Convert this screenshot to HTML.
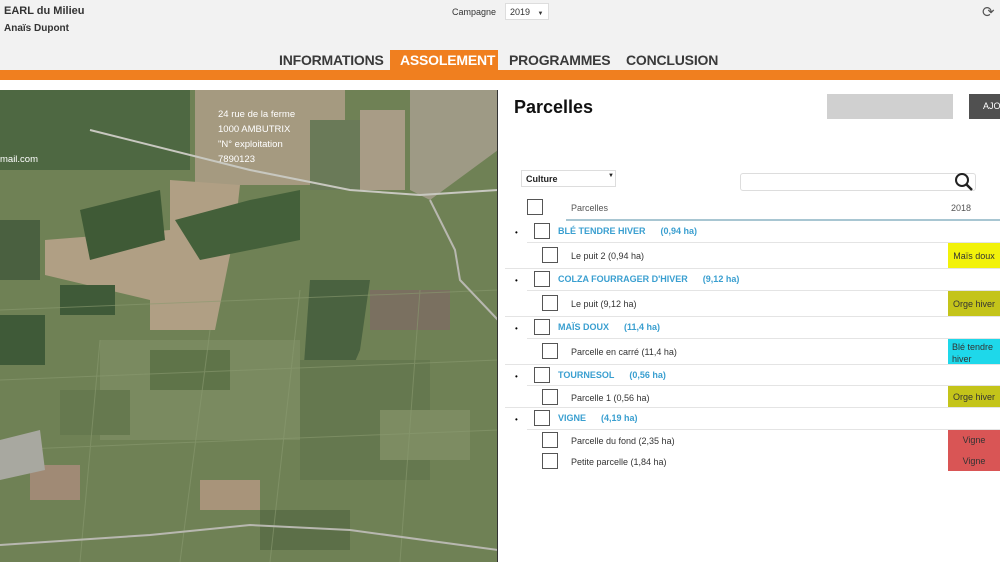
<!DOCTYPE html><html><head><meta charset="utf-8"><style>
*{margin:0;padding:0;box-sizing:border-box}
body{width:1000px;height:562px;overflow:hidden;background:#fff;font-family:"Liberation Sans",sans-serif;position:relative}
.a{position:absolute}
.hdr{left:0;top:0;width:1000px;height:70px;background:#f2f2f2}
.bar{left:0;top:70px;width:1000px;height:10px;background:#f07f1f}
.tab{top:52px;font-size:14px;font-weight:bold;color:#3a3a3a;letter-spacing:-.2px}
.cb{width:16px;height:16px;border:1.5px solid #555;background:#fff}
.g{font-size:9px;font-weight:bold;color:#3a9fd0}
.c{font-size:9px;color:#333}
.sep{height:1px;background:#e4e4e4}
.col{left:948px;width:52px;font-size:9px;color:#333;text-align:center}
</style></head><body>
<div class="a hdr"></div>
<div class="a" style="left:4px;top:5px;font-size:11px;font-weight:bold;color:#333">EARL du Milieu</div>
<div class="a" style="left:4px;top:23px;font-size:10px;font-weight:bold;color:#333">Anaïs Dupont</div>
<div class="a" style="left:452px;top:7px;font-size:9px;color:#333">Campagne</div>
<div class="a" style="left:505px;top:3px;width:44px;height:17px;background:#fff;border:1px solid #ddd;font-size:9px;padding:3px 4px;color:#333;white-space:nowrap">2019 <span style="font-size:6px;margin-left:5px">▼</span></div>
<div class="a" style="left:982px;top:3px;font-size:15px;color:#555">⟳</div>
<div class="a" style="left:390px;top:50px;width:108px;height:21px;background:#f07f1f"></div>
<div class="a tab" style="left:279px">INFORMATIONS</div>
<div class="a tab" style="left:400px;color:#fff">ASSOLEMENT</div>
<div class="a tab" style="left:509px">PROGRAMMES</div>
<div class="a tab" style="left:626px">CONCLUSION</div>
<div class="a bar"></div>
<svg class="a" style="left:0;top:90px" width="498" height="472">
<rect width="498" height="472" fill="#6f8155"/>
<rect x="195" y="0" width="150" height="95" fill="#a59a80"/>
<rect x="360" y="20" width="45" height="80" fill="#a89c86"/>
<rect x="310" y="30" width="50" height="70" fill="#6a7a58"/>
<polygon points="410,0 498,0 498,60 430,110 410,100" fill="#9e9a85"/>
<polygon points="45,150 170,140 170,90 240,95 235,140 215,240 150,240 150,210 45,185" fill="#b09f84"/>
<rect x="0" y="0" width="190" height="80" fill="#4e6842"/>
<rect x="0" y="130" width="40" height="60" fill="#4a6040"/>
<polygon points="80,120 160,100 165,150 90,170" fill="#3f5a36"/>
<polygon points="175,130 250,110 300,100 300,150 200,170" fill="#44603a"/>
<polygon points="310,190 370,190 360,260 330,330 300,330" fill="#4a6240"/>
<rect x="0" y="225" width="45" height="50" fill="#3f5a38"/>
<rect x="60" y="195" width="55" height="30" fill="#3f5a38"/>
<rect x="370" y="200" width="80" height="40" fill="#7a7060"/>
<rect x="100" y="250" width="200" height="100" fill="#7a8a60"/>
<rect x="30" y="375" width="50" height="35" fill="#a08a75"/>
<rect x="200" y="390" width="60" height="30" fill="#a8947a"/>
<rect x="300" y="270" width="130" height="120" fill="#65784f"/>
<rect x="150" y="260" width="80" height="40" fill="#5f7449"/>
<rect x="380" y="320" width="90" height="50" fill="#7d8c62"/>
<rect x="60" y="300" width="70" height="45" fill="#66794f"/>
<rect x="260" y="420" width="90" height="40" fill="#5c6f48"/>
<g stroke="#8a9a70" stroke-width="1" opacity=".6">
<line x1="0" y1="220" x2="498" y2="200"/><line x1="0" y1="290" x2="498" y2="270"/><line x1="0" y1="360" x2="498" y2="340"/>
<line x1="100" y1="250" x2="80" y2="472"/><line x1="210" y1="240" x2="180" y2="472"/><line x1="300" y1="200" x2="270" y2="472"/><line x1="420" y1="200" x2="400" y2="472"/>
</g>
<polyline points="90,40 250,80 350,100 420,105 498,100" stroke="#c8c8c0" stroke-width="2" fill="none"/>
<polyline points="0,455 150,445 250,435 350,440 498,460" stroke="#b8b8b0" stroke-width="2" fill="none"/>
<polyline points="430,110 455,160 460,190 498,230" stroke="#b8b8b0" stroke-width="2" fill="none"/>
<polygon points="0,350 40,340 45,380 0,390" fill="#a8a8a0"/>
<rect x="497" y="0" width="2" height="472" fill="#333"/>
<text x="218" y="27" fill="#fff" font-size="9.5" font-family="Liberation Sans">24 rue de la ferme</text>
<text x="218" y="42" fill="#fff" font-size="9.5" font-family="Liberation Sans">1000 AMBUTRIX</text>
<text x="218" y="57" fill="#fff" font-size="9.5" font-family="Liberation Sans">"N° exploitation</text>
<text x="218" y="72" fill="#fff" font-size="9.5" font-family="Liberation Sans">7890123</text>
<text x="0" y="72" fill="#fff" font-size="9.5" font-family="Liberation Sans">mail.com</text>
</svg>
<div class="a" style="left:514px;top:97px;font-size:18px;font-weight:bold;color:#111">Parcelles</div>
<div class="a" style="left:827px;top:94px;width:126px;height:25px;background:#d0d0d0"></div>
<div class="a" style="left:969px;top:94px;width:31px;height:25px;background:#505050;color:#fff;font-size:9px;padding:7px 0 0 14px">AJO</div>
<div class="a" style="left:521px;top:170px;width:95px;height:17px;border:1px solid #ddd;font-size:9px;font-weight:bold;padding:3px 4px;color:#222">Culture<span style="position:absolute;left:86px;top:2px;font-size:6px">▼</span></div>
<div class="a" style="left:740px;top:173px;width:236px;height:18px;border:1px solid #ddd;border-radius:3px"></div>
<svg class="a" style="left:954px;top:172px" width="20" height="20"><circle cx="8" cy="8" r="6" stroke="#222" stroke-width="2" fill="none"/><line x1="12.5" y1="12.5" x2="18" y2="18" stroke="#222" stroke-width="2.5"/></svg>
<div class="a cb" style="left:527px;top:199px"></div>
<div class="a" style="left:571px;top:203px;font-size:9px;color:#555">Parcelles</div>
<div class="a" style="left:951px;top:203px;font-size:9px;color:#555">2018</div>
<div class="a" style="left:566px;top:219px;width:434px;height:1.5px;background:#a8c6d2"></div>

<div class="a" style="left:515px;top:228px;font-size:8px">•</div><div class="a cb" style="left:534px;top:223px"></div>
<div class="a g" style="left:558px;top:226px">BLÉ TENDRE HIVER&nbsp;&nbsp;&nbsp;&nbsp;&nbsp;&nbsp;(0,94 ha)</div>
<div class="a sep" style="left:527px;top:242px;width:473px"></div>
<div class="a cb" style="left:542px;top:247px"></div><div class="a c" style="left:571px;top:251px">Le puit 2 (0,94 ha)</div>
<div class="a col" style="top:243px;height:25px;background:#f2f20a;padding-top:8px">Maïs doux</div>
<div class="a sep" style="left:505px;top:268px;width:495px"></div>

<div class="a" style="left:515px;top:276px;font-size:8px">•</div><div class="a cb" style="left:534px;top:271px"></div>
<div class="a g" style="left:558px;top:274px">COLZA FOURRAGER D'HIVER&nbsp;&nbsp;&nbsp;&nbsp;&nbsp;&nbsp;(9,12 ha)</div>
<div class="a sep" style="left:527px;top:290px;width:473px"></div>
<div class="a cb" style="left:542px;top:295px"></div><div class="a c" style="left:571px;top:299px">Le puit (9,12 ha)</div>
<div class="a col" style="top:291px;height:25px;background:#c4c41a;padding-top:8px">Orge hiver</div>
<div class="a sep" style="left:505px;top:316px;width:495px"></div>

<div class="a" style="left:515px;top:324px;font-size:8px">•</div><div class="a cb" style="left:534px;top:319px"></div>
<div class="a g" style="left:558px;top:322px">MAÏS DOUX&nbsp;&nbsp;&nbsp;&nbsp;&nbsp;&nbsp;(11,4 ha)</div>
<div class="a sep" style="left:527px;top:338px;width:473px"></div>
<div class="a cb" style="left:542px;top:343px"></div><div class="a c" style="left:571px;top:347px">Parcelle en carré (11,4 ha)</div>
<div class="a col" style="top:339px;height:25px;background:#1ed8ea;padding-top:2px;text-align:left;padding-left:4px;line-height:12px">Blé tendre hiver</div>
<div class="a sep" style="left:505px;top:364px;width:495px"></div>

<div class="a" style="left:515px;top:372px;font-size:8px">•</div><div class="a cb" style="left:534px;top:367px"></div>
<div class="a g" style="left:558px;top:370px">TOURNESOL&nbsp;&nbsp;&nbsp;&nbsp;&nbsp;&nbsp;(0,56 ha)</div>
<div class="a sep" style="left:527px;top:385px;width:473px"></div>
<div class="a cb" style="left:542px;top:389px"></div><div class="a c" style="left:571px;top:393px">Parcelle 1 (0,56 ha)</div>
<div class="a col" style="top:386px;height:21px;background:#c4c41a;padding-top:6px">Orge hiver</div>
<div class="a sep" style="left:505px;top:407px;width:495px"></div>

<div class="a" style="left:515px;top:415px;font-size:8px">•</div><div class="a cb" style="left:534px;top:410px"></div>
<div class="a g" style="left:558px;top:413px">VIGNE&nbsp;&nbsp;&nbsp;&nbsp;&nbsp;&nbsp;(4,19 ha)</div>
<div class="a sep" style="left:527px;top:429px;width:473px"></div>
<div class="a cb" style="left:542px;top:432px"></div><div class="a c" style="left:571px;top:436px">Parcelle du fond (2,35 ha)</div>
<div class="a cb" style="left:542px;top:453px"></div><div class="a c" style="left:571px;top:457px">Petite parcelle (1,84 ha)</div>
<div class="a col" style="top:430px;height:41px;background:#d95555;padding-top:0;line-height:21px">Vigne<br>Vigne</div>
</body></html>
